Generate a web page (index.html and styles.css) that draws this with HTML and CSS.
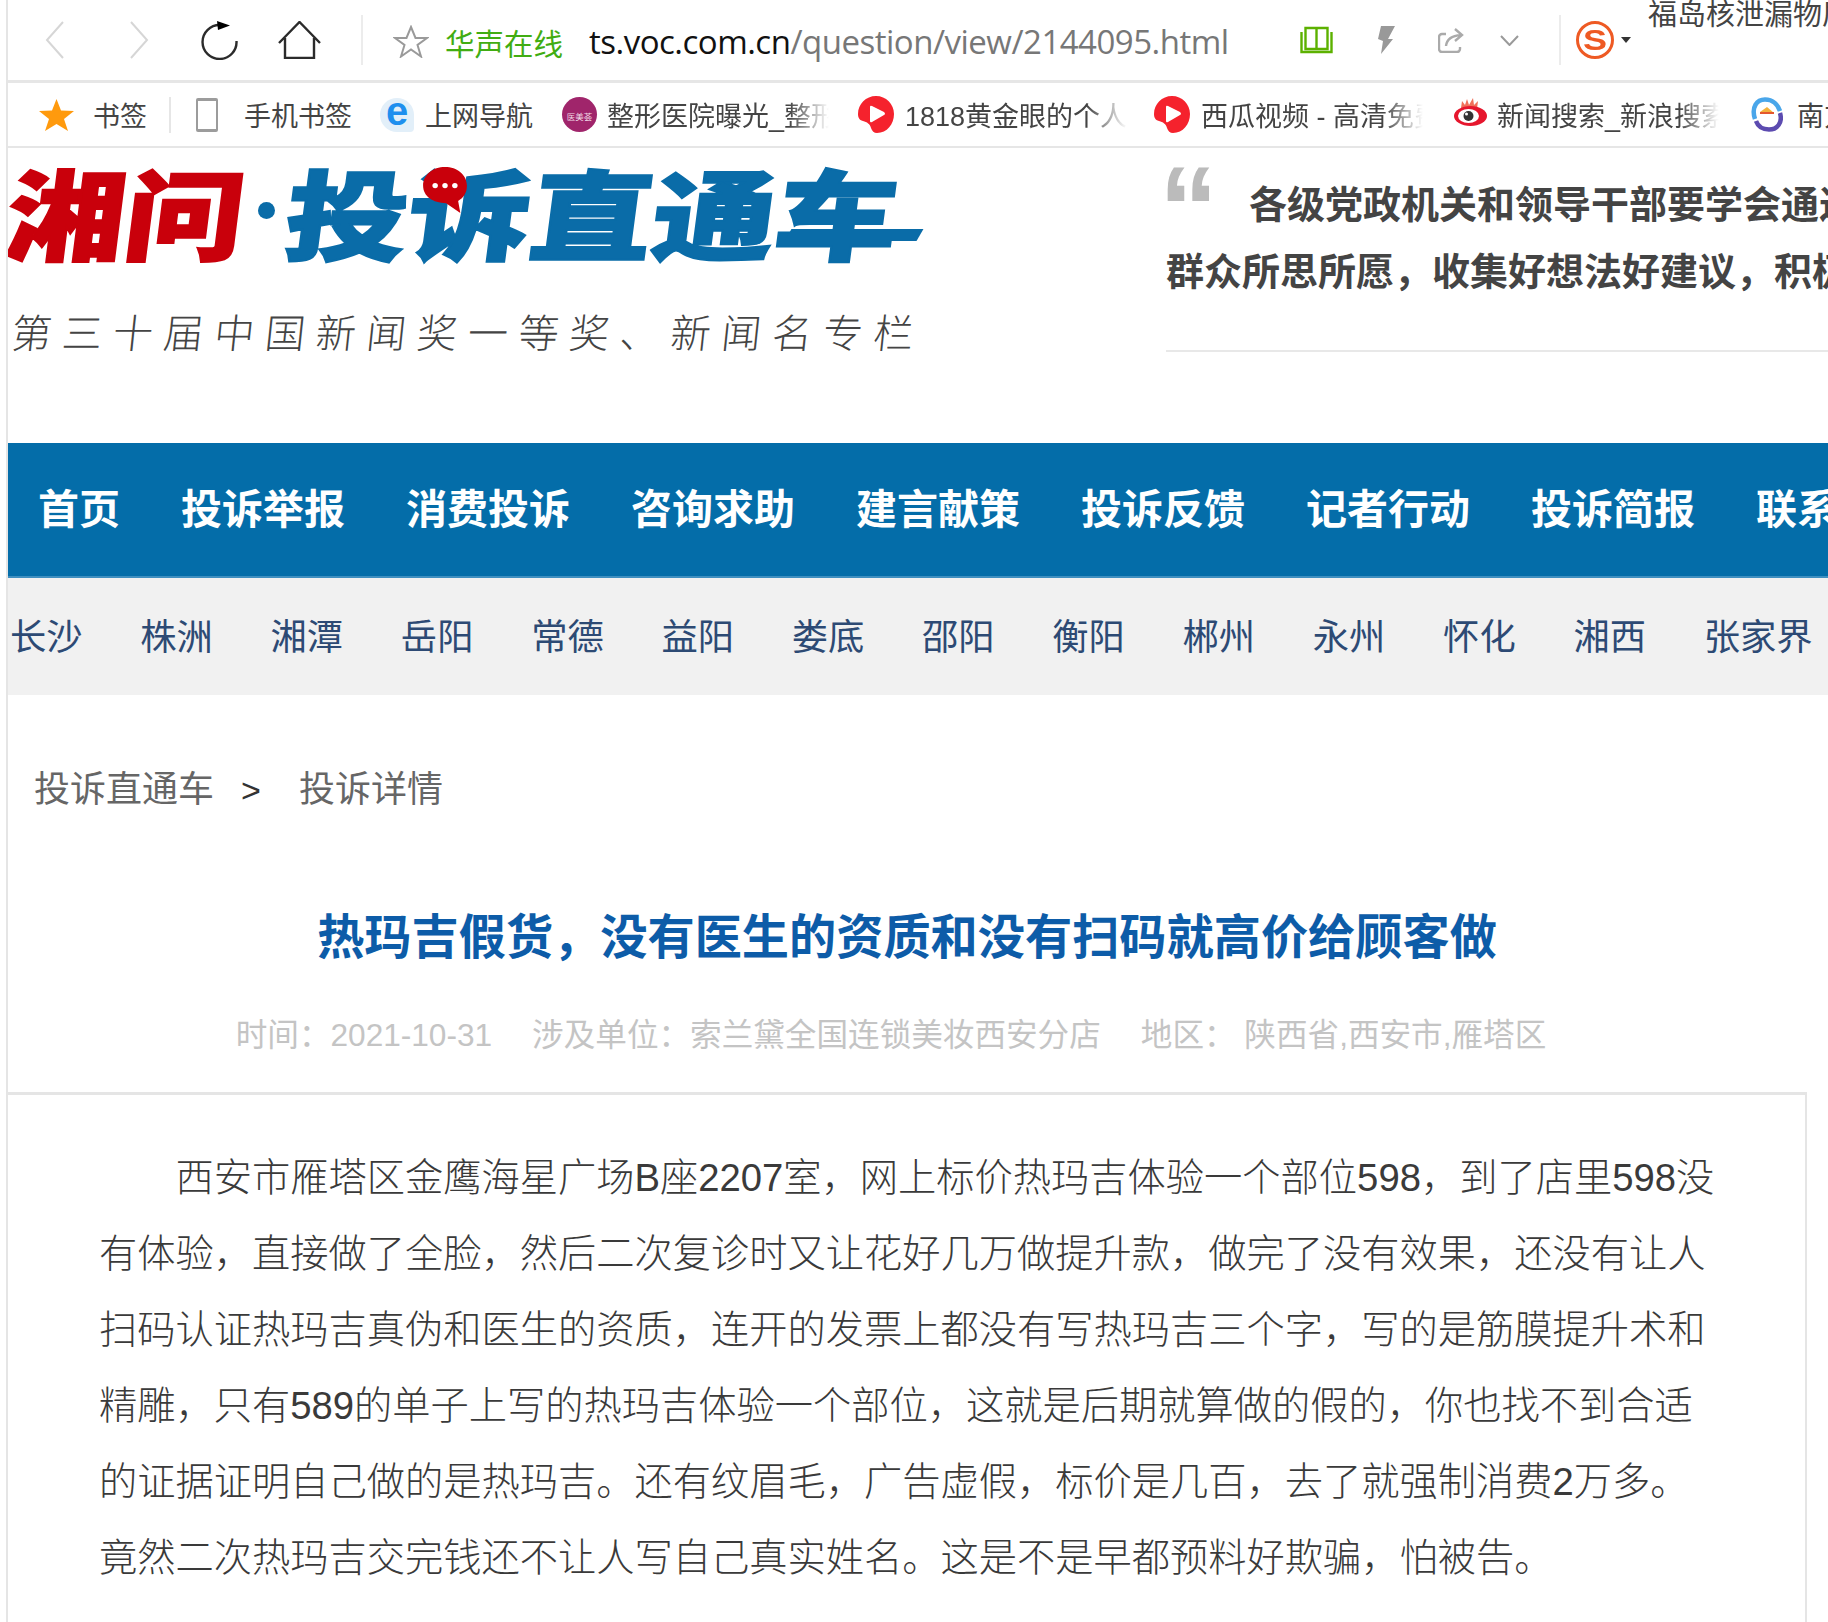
FILE: index.html
```html
<!DOCTYPE html>
<html lang="zh-CN">

<head>
  <meta charset="UTF-8">
  <title>热玛吉假货，没有医生的资质和没有扫码就高价给顾客做</title>
  <link rel="stylesheet" href="styles.css">
</head>

<body>
  <div class="page">

    <!-- browser toolbar -->
    <div class="toolbar">
      <svg class="t-back" width="20" height="38" viewBox="0 0 20 38"><path class="line-pale" d="M18 1 2 19l16 18"/></svg>
      <svg class="t-forward" width="20" height="38" viewBox="0 0 20 38"><path class="line-pale" d="M2 1l16 18L2 37"/></svg>
      <svg class="t-reload" width="37" height="39" viewBox="0 0 37 39"><path class="line-dark" d="M19 4A17 17 0 1 0 35.500 20"/><path d="M16 0l13 4.500L17 9z"/></svg>
      <svg class="t-home" width="43" height="38" viewBox="0 0 43 38"><path class="line-dark" d="M1 22 21.500 1 42 22M7 17v20h29V17"/></svg>
      <span class="t-sep t-sep-left"></span>
      <svg class="t-star" width="36" height="33" viewBox="0 0 36 33"><path class="line-grey" d="M18 2l4.500 11H34l-9.500 7 3.500 11.500-10-7-10 7 3.500-11.500L2 13h11.500z"/></svg>
      <span class="t-site">华声在线</span>
      <span class="t-url"><b>ts.voc.com.cn</b>/question/view/2144095.html</span>
      <svg class="t-book" width="33" height="28" viewBox="0 0 33 28"><path class="line-green" d="M1.500 6v20h30V6M5.500 2h11v21h-11zM16.500 2h11v21h-11z"/></svg>
      <svg class="t-bolt" width="17" height="28" viewBox="0 0 17 28"><path fill="#999" d="M3 0h14l-7 13h5L3 28l2-13-5-2z"/></svg>
      <svg class="t-share" width="26" height="25" viewBox="0 0 26 25"><path class="line-soft" d="M8 6H4a3 3 0 0 0-3 3v12a3 3 0 0 0 3 3h15a3 3 0 0 0 3-3v-2M8 18q1-10 15-11M17 1l7 6-7 6"/></svg>
      <svg class="t-chevron" width="19" height="11" viewBox="0 0 19 11"><path class="line-grey" d="M1 1l8.500 9L18 1"/></svg>
      <span class="t-sep t-sep-right"></span>
      <span class="t-sogou"><span>S</span></span>
      <span class="t-caret"></span>
      <span class="t-search">福岛核泄漏物质</span>
    </div>

    <!-- bookmarks -->
    <div class="bookmarks">
      <svg class="b-star" width="37" height="32" viewBox="0 0 37 32"><path fill="#ff9a0d" d="M18.500 0l4.500 11.500 13 .5-10 8 4 12-11.500-7-11.500 7 4-12-10-8 13-.5z"/></svg>
      <span class="b-label b-first">书签</span>
      <span class="b-sep"></span>
      <span class="b-phone"></span>
      <span class="b-label b-mobile">手机书签</span>
      <span class="b-ie">e</span>
      <span class="b-label b-nav">上网导航</span>
      <span class="b-badge">医美荟</span>
      <span class="b-label b-fade">整形医院曝光_整形医院</span>
      <svg class="b-icon b-play" width="37" height="37" viewBox="0 0 37 37"><path fill="#f5222d" d="M18 0c10 0 18 8 18 18 0 10-7 19-17 19-3 0-5-2-6-5-1-4-4-6-8-7-4-1-5-4-5-7C0 8 8 0 18 0z"/><path fill="#fff" d="M12 11q0-2 2-1l12 6q2 2 0 3l-12 7q-2 1-2-1z"/></svg>
      <span class="b-label b-fade">1818黄金眼的个人空间</span>
      <svg class="b-icon" width="37" height="37" viewBox="0 0 37 37"><path fill="#f5222d" d="M18 0c10 0 18 8 18 18 0 10-7 19-17 19-3 0-5-2-6-5-1-4-4-6-8-7-4-1-5-4-5-7C0 8 8 0 18 0z"/><path fill="#fff" d="M12 11q0-2 2-1l12 6q2 2 0 3l-12 7q-2 1-2-1z"/></svg>
      <span class="b-label b-fade">西瓜视频 - 高清免费视频</span>
      <svg class="b-icon b-weibo" width="33" height="28" viewBox="0 0 33 28"><path fill="#f0705a" d="M7 10 8 3l3 4 2-6 2 6 4-7 1 7 4-4-1 8z"/><ellipse cx="16.500" cy="18" rx="16.500" ry="10" fill="#e6162d"/><ellipse cx="14.500" cy="18" rx="10.500" ry="7" fill="#fff"/><circle cx="14.500" cy="18" r="5" fill="#333"/><circle cx="12.500" cy="16" r="1.500" fill="#fff"/></svg>
      <span class="b-label b-fade">新闻搜索_新浪搜索引擎</span>
      <svg class="b-icon b-south" width="32" height="35" viewBox="0 0 32 35"><path fill="none" stroke="#49a6ea" stroke-width="4.500" d="M4 22C0 10 6 2.500 14 2.500 22 2.500 27 8 29 14"/><path fill="none" stroke="#5c4bb0" stroke-width="4.500" d="M29 16c3 10-3 16.500-11 16.500-6 0-11-3-13-8.500"/><path fill="#f3b23c" d="M9 15l7-5 7 6z"/><path fill="#e4572e" d="M9 15h14v2H9z"/></svg>
      <span class="b-label">南方网</span>
    </div>

    <!-- site header -->
    <header class="site-head">
      <div class="brand">
        <div class="logo">
          <span class="logo-red">湘问</span>
          <span class="logo-dot"></span>
          <span class="logo-blue">投诉直通车</span>
          <span class="logo-swoosh"></span>
          <svg class="logo-bubble" width="46" height="46" viewBox="0 0 42 42"><path fill="#c9000b" d="M21 0c11 0 20 7 20 17 0 7-3 11-8 14l2 11-13-9C10 33 1 27 1 17 1 7 10 0 21 0z"/><circle cx="12" cy="17" r="2.500" fill="#fff"/><circle cx="21" cy="17" r="2.500" fill="#fff"/><circle cx="30" cy="17" r="2.500" fill="#fff"/></svg>
        </div>
        <div class="slogan">第三十届中国新闻奖一等奖、新闻名专栏</div>
      </div>
      <div class="quote">
        <div class="quote-first"><span class="quote-mark">“</span><span>各级党政机关和领导干部要学会通过网络走群众路线</span></div>
        <div class="quote-line">群众所思所愿，收集好想法好建议，积极回应网民关切</div>
      </div>
    </header>

    <nav class="main-nav">
      <a>首页</a>
      <a>投诉举报</a>
      <a>消费投诉</a>
      <a>咨询求助</a>
      <a>建言献策</a>
      <a>投诉反馈</a>
      <a>记者行动</a>
      <a>投诉简报</a>
      <a>联系我们</a>
    </nav>

    <nav class="city-nav">
      <a>长沙</a>
      <a>株洲</a>
      <a>湘潭</a>
      <a>岳阳</a>
      <a>常德</a>
      <a>益阳</a>
      <a>娄底</a>
      <a>邵阳</a>
      <a>衡阳</a>
      <a>郴州</a>
      <a>永州</a>
      <a>怀化</a>
      <a>湘西</a>
      <a>张家界</a>
    </nav>

    <div class="crumbs">投诉直通车<span class="crumb-gt">&gt;</span>投诉详情</div>

    <h1 class="title">热玛吉假货，没有医生的资质和没有扫码就高价给顾客做</h1>

    <div class="meta">
      <span>时间：2021-10-31</span>
      <span>涉及单位：索兰黛全国连锁美妆西安分店</span>
      <span>地区：&nbsp;陕西省,西安市,雁塔区</span>
    </div>

    <article class="content">
      <p>西安市雁塔区金鹰海星广场B座2207室，网上标价热玛吉体验一个部位598，到了店里598没有体验，直接做了全脸，然后二次复诊时又让花好几万做提升款，做完了没有效果，还没有让人扫码认证热玛吉真伪和医生的资质，连开的发票上都没有写热玛吉三个字，写的是筋膜提升术和精雕，只有589的单子上写的热玛吉体验一个部位，这就是后期就算做的假的，你也找不到合适的证据证明自己做的是热玛吉。还有纹眉毛，广告虚假，标价是几百，去了就强制消费2万多。竟然二次热玛吉交完钱还不让人写自己真实姓名。这是不是早都预料好欺骗，怕被告。</p>
    </article>

  </div>
</body>

</html>
```

FILE: styles.css
```css
html, body {
  margin: 0;
  height: 1622px;
  overflow: hidden;
  background: #fff;
}

body {
  font-family: "Liberation Sans", "Noto Sans CJK SC", sans-serif;
  color: #333;
}

.page {
  margin-left: 6px;
  width: 1820px;
  height: 1622px;
  overflow: hidden;
  border-left: 2px solid #e5e5e5;
}

/* toolbar */
.toolbar {
  display: flex;
  align-items: center;
  height: 80px;
  border-bottom: 3px solid #e6e6e6;
  white-space: nowrap;
}

.toolbar svg,
.bookmarks svg {
  flex: none;
}

.line-pale, .line-dark, .line-grey, .line-green, .line-soft {
  fill: none;
  stroke-width: 2;
}
.line-pale { stroke: #d6d6d6; }
.line-dark { stroke: #2b2b2b; stroke-width: 2.400; }
.line-grey { stroke: #9a9a9a; }
.line-green { stroke: #5cb100; stroke-width: 2.400; }
.line-soft { stroke: #aaa; stroke-width: 2.400; }

.t-back { margin-left: 37px; }
.t-forward { margin-left: 64px; }
.t-reload { margin-left: 52px; }
.t-home { margin-left: 40px; }

.t-sep {
  flex: none;
  width: 2px;
  height: 50px;
  background: #ececec;
}
.t-sep-left { margin-left: 40px; }
.t-star { margin-left: 30px; margin-top: 2px; }

.t-site {
  margin-left: 16px;
  font-size: 29.500px;
  color: #41ad12;
  margin-top: 4px;
}

.t-url {
  margin-left: 26px;
  width: 640px;
  flex: none;
  font-family: "Open Sans", sans-serif;
  font-size: 33px;
  letter-spacing: -0.5px;
  color: #777;
  margin-top: 2px;
}
.t-url b {
  font-weight: 400;
  color: #111;
}

.t-book { margin-left: 71px; }
.t-bolt { margin-left: 45px; }
.t-share { margin-left: 43px; }
.t-chevron { margin-left: 36px; }
.t-sep-right { margin-left: 40px; }

.t-sogou {
  flex: none;
  display: flex;
  justify-content: center;
  width: 32px;
  height: 32px;
  margin-left: 15px;
  border: 3px solid #ee5a24;
  border-radius: 50%;
  line-height: 31px;
  font-size: 30px;
  font-weight: 700;
  color: #ee5a24;
}
.t-sogou span {
  transform: scaleX(1.200);
}

.t-caret {
  margin-left: 7px;
  border-left: 5px solid transparent;
  border-right: 5px solid transparent;
  border-top: 6px solid #333;
}

.t-search {
  align-self: flex-start;
  margin-left: 17px;
  margin-top: -3px;
  font-size: 29px;
  line-height: 36px;
  color: #444;
}

/* bookmarks */
.bookmarks {
  display: flex;
  align-items: center;
  height: 63px;
  border-bottom: 2px solid #e6e6e6;
  white-space: nowrap;
}

.b-label {
  flex: none;
  font-size: 27px;
  color: #444;
}

.b-star { margin-left: 30px; }
.b-first { margin-left: 18px; }

.b-sep {
  flex: none;
  width: 2px;
  height: 36px;
  margin-left: 22px;
  background: #e6e6e6;
}

.b-phone {
  flex: none;
  width: 18px;
  height: 28px;
  margin-left: 25px;
  border: 2px solid #9c9c9c;
  border-top-width: 3px;
  border-bottom-width: 3px;
  border-radius: 2px;
}

.b-mobile { margin-left: 26px; }

.b-ie {
  flex: none;
  width: 34px;
  height: 34px;
  margin-left: 28px;
  border-radius: 50% 50% 4px 50%;
  background: #e2eff9;
  text-align: center;
  line-height: 27px;
  font-size: 40px;
  font-weight: 700;
  color: #1e8fee;
}

.b-nav { margin-left: 11px; }

.b-badge {
  flex: none;
  width: 35px;
  height: 35px;
  margin-left: 29px;
  border-radius: 50%;
  background: #a0256b;
  text-align: center;
  line-height: 40px;
  font-size: 8.500px;
  color: #f0d8e6;
  overflow: hidden;
}

.b-fade {
  width: 222px;
  margin-left: 10px;
  overflow: hidden;
  -webkit-mask-image: linear-gradient(to right, #000 82%, transparent);
  mask-image: linear-gradient(to right, #000 82%, transparent);
}

.b-icon {
  margin-left: 27px;
}
.b-play { margin-left: 29px; }
.b-weibo { margin-left: 31px; margin-top: -5px; }
.b-south { margin-left: 32px; }
.b-south + .b-label { margin-left: 14px; }

/* header */
.site-head {
  display: flex;
  height: 295px;
}

.brand {
  flex: none;
  width: 1158px;
  padding-top: 17px;
  box-sizing: border-box;
}

.logo {
  position: relative;
  display: flex;
  height: 90px;
  font-family: "Noto Sans CJK SC", sans-serif;
  font-size: 98px;
  font-weight: 900;
  line-height: 90px;
  white-space: nowrap;
  -webkit-text-stroke: 2px currentColor;
}

.logo-red {
  flex: none;
  width: 241px;
  color: #c9000b;
  transform-origin: left center;
  transform: scaleX(1.210) skewX(-6deg);
}

.logo-dot {
  flex: none;
  align-self: center;
  width: 17px;
  height: 17px;
  margin-left: 9px;
  border-radius: 50%;
  background: #0a6ca8;
}

.logo-blue {
  flex: none;
  margin-left: 12px;
  width: 600px;
  color: #0a6ca8;
  transform-origin: left center;
  transform: scaleX(1.250) skewX(-6deg);
}

/* tail that runs out from under the last characters of the logo */
.logo-swoosh {
  position: absolute;
  left: 780px;
  top: 64px;
  width: 132px;
  height: 12px;
  background: #0a6ca8;
  transform: skewX(-30deg);
}

.logo-bubble {
  position: absolute;
  left: 414px;
  top: 2px;
}

.slogan {
  margin-top: 51px;
  padding-left: 4px;
  font-family: "Noto Sans CJK SC", sans-serif;
  font-size: 40px;
  font-weight: 300;
  line-height: 50px;
  letter-spacing: 10.700px;
  color: #444;
  white-space: nowrap;
  transform: skewX(-6deg);
}

.quote {
  flex: none;
  width: 800px;
  height: 202px;
  border-bottom: 2px solid #e8e8e8;
  font-family: "Noto Sans CJK SC", sans-serif;
  font-size: 38px;
  font-weight: 700;
  line-height: 66px;
  color: #444;
  white-space: nowrap;
}

.quote-first {
  display: flex;
  margin-top: 21px;
}

.quote-mark {
  flex: none;
  width: 90px;
  height: 40px;
  margin-left: -7px;
  font-family: "Liberation Sans", sans-serif;
  font-size: 118px;
  line-height: 78px;
  color: #bbb;
}

.quote-line {
  margin-top: 1px;
}

/* nav */
.main-nav {
  display: flex;
  align-items: center;
  gap: 61px;
  height: 126px;
  padding: 0 0 7px 30px;
  background: #046da9;
  border-bottom: 2px solid #3f8fc0;
  white-space: nowrap;
  font-family: "Noto Sans CJK SC", sans-serif;
  font-size: 41px;
  font-weight: 700;
  color: #fff;
}

.main-nav a {
  flex: none;
}

.city-nav {
  display: flex;
  align-items: center;
  gap: 57.700px;
  height: 111px;
  padding: 0 0 6px 2px;
  background: #f1f1f1;
  white-space: nowrap;
  font-size: 36.300px;
  color: #2d4a74;
}

.city-nav a {
  flex: none;
}

.crumbs {
  padding: 65px 0 0 26px;
  font-size: 36px;
  line-height: 60px;
  color: #666;
}

.crumb-gt {
  margin: 0 38px 0 27px;
  font-size: 34px;
  color: #333;
}

.title {
  width: 1798px;
  margin: 84px 0 0;
  text-align: center;
  font-family: "Noto Sans CJK SC", sans-serif;
  font-size: 47.200px;
  font-weight: 700;
  line-height: 60px;
  color: #0d5ca8;
}

.meta {
  display: flex;
  justify-content: center;
  gap: 40px;
  width: 1766px;
  margin-top: 51px;
  font-size: 31.600px;
  line-height: 40px;
  color: #c4c4c4;
  white-space: nowrap;
}

.content {
  width: 1799px;
  box-sizing: border-box;
  margin-top: 37px;
  padding: 45px 85px 0 91px;
  border-top: 3px solid #e5e5e5;
  border-right: 2px solid #e5e5e5;
  height: 600px;
}

.content p {
  margin: 0;
  font-size: 38.250px;
  font-weight: 300;
  line-height: 76px;
  text-indent: 2em;
  color: #3a3a3a;
}
```
